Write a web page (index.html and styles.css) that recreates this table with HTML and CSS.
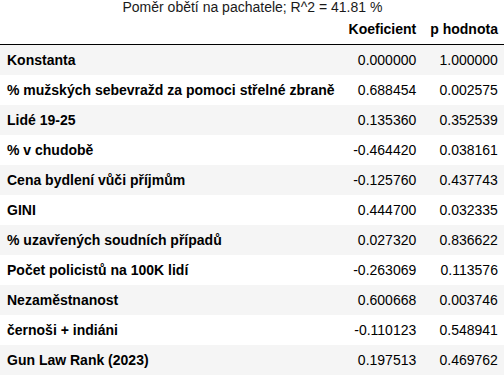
FILE: index.html
```html
<!DOCTYPE html>
<html lang="cs">
<head>
<meta charset="utf-8">
<title>Poměr obětí na pachatele</title>
<link rel="stylesheet" href="styles.css">
</head>
<body>
<table class="df">
  <caption class="df-caption">Poměr obětí na pachatele; R^2 = 41.81 %</caption>
  <thead>
    <tr class="head-row">
      <th class="blank"></th>
      <th class="col-head">Koeficient</th>
      <th class="col-head">p hodnota</th>
    </tr>
  </thead>
  <tbody>
    <tr><th class="row-head">Konstanta</th><td class="num">0.000000</td><td class="num">1.000000</td></tr>
    <tr><th class="row-head">% mužských sebevražd za pomoci střelné zbraně</th><td class="num">0.688454</td><td class="num">0.002575</td></tr>
    <tr><th class="row-head">Lidé 19-25</th><td class="num">0.135360</td><td class="num">0.352539</td></tr>
    <tr><th class="row-head">% v chudobě</th><td class="num">-0.464420</td><td class="num">0.038161</td></tr>
    <tr><th class="row-head">Cena bydlení vůči příjmům</th><td class="num">-0.125760</td><td class="num">0.437743</td></tr>
    <tr><th class="row-head">GINI</th><td class="num">0.444700</td><td class="num">0.032335</td></tr>
    <tr><th class="row-head">% uzavřených soudních případů</th><td class="num">0.027320</td><td class="num">0.836622</td></tr>
    <tr><th class="row-head">Počet policistů na 100K lidí</th><td class="num">-0.263069</td><td class="num">0.113576</td></tr>
    <tr><th class="row-head">Nezaměstnanost</th><td class="num">0.600668</td><td class="num">0.003746</td></tr>
    <tr><th class="row-head">černoši + indiáni</th><td class="num">-0.110123</td><td class="num">0.548941</td></tr>
    <tr><th class="row-head">Gun Law Rank (2023)</th><td class="num">0.197513</td><td class="num">0.469762</td></tr>
  </tbody>
</table>
</body>
</html>
```
FILE: styles.css
```css
html, body {
  margin: 0;
  padding: 0;
  background: #ffffff;
}

body {
  font-family: "Liberation Sans", Arial, sans-serif;
  font-size: 14px;
  color: #000000;
}

.df {
  width: 100%;
  border-collapse: collapse;
  border-spacing: 0;
}

.df-caption {
  font-size: 14px;
  line-height: 14px;
  color: #1a1a1a;
  text-align: center;
  white-space: nowrap;
}

.df th,
.df td {
  padding: 7px;
  line-height: 16px;
  vertical-align: middle;
  white-space: nowrap;
}

.head-row th {
  border-bottom: 1px solid #000000;
}

.col-head {
  text-align: right;
  font-weight: bold;
}

.row-head {
  text-align: left;
  font-weight: bold;
}

.num {
  text-align: right;
  font-weight: normal;
}

.df tbody tr:nth-child(odd) {
  background: #f5f5f5;
}
```
